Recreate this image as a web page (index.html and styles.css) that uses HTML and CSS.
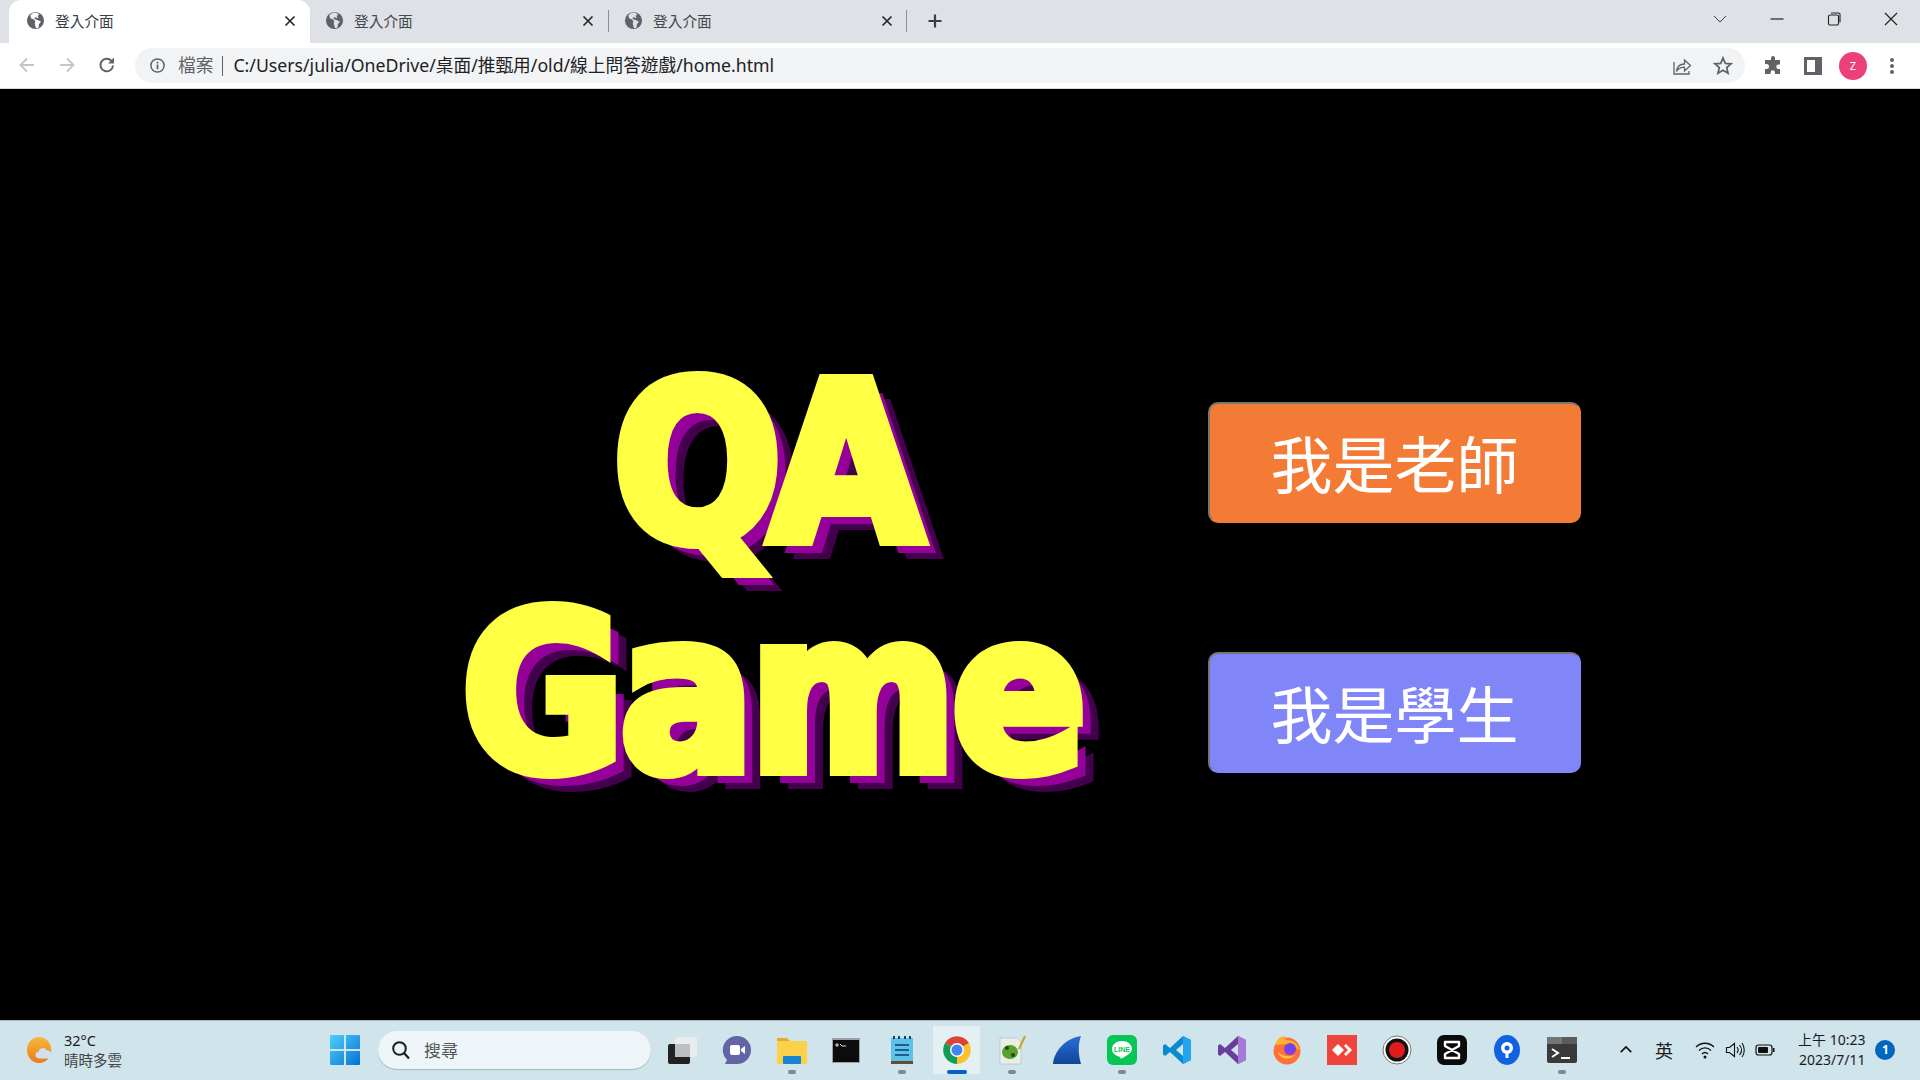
FILE: index.html
```html
<!DOCTYPE html>
<html lang="zh-Hant">

<head>
    <meta charset="UTF-8">
    <title>登入介面</title>
    <link rel="stylesheet" href="styles.css">
</head>

<body>
    <!-- 分頁列 -->
    <div class="tabstrip">
        <div class="tab tab-active">
            <svg class="globe" viewBox="0 0 20 20"><circle cx="10" cy="10" r="9" fill="#5f6368"/><path d="M10 1.500c-2 .3-4 1.200-5.400 2.800l.6 3.200 3.300 1.500 1.200 1.800-.5 2.700 1.300 4.500c1.300 0 2.200-.3 2.800-1l.2-3 2.300-2.700-3.500-1.800-2.700-.8-.8-1.600 1.900-.5 1.500 1 1-.7-1.200-1.600 2-1.400c-1-1.300-2.300-2-4-2.300z" fill="#fff"/></svg>
            <span class="tab-title">登入介面</span>
            <svg class="tab-close" viewBox="0 0 12 12"><path d="M1.500 1.500l9 9M10.500 1.500l-9 9" stroke="#26282b" stroke-width="1.700" fill="none"/></svg>
        </div>
        <div class="tab">
            <svg class="globe" viewBox="0 0 20 20"><circle cx="10" cy="10" r="9" fill="#5f6368"/><path d="M10 1.500c-2 .3-4 1.200-5.400 2.800l.6 3.200 3.300 1.500 1.200 1.800-.5 2.700 1.300 4.500c1.300 0 2.200-.3 2.800-1l.2-3 2.300-2.700-3.500-1.800-2.700-.8-.8-1.600 1.900-.5 1.500 1 1-.7-1.200-1.600 2-1.400c-1-1.300-2.300-2-4-2.300z" fill="#dee1e6"/></svg>
            <span class="tab-title">登入介面</span>
            <svg class="tab-close" viewBox="0 0 12 12"><path d="M1.500 1.500l9 9M10.500 1.500l-9 9" stroke="#26282b" stroke-width="1.700" fill="none"/></svg>
        </div>
        <div class="tab tab-sep">
            <svg class="globe" viewBox="0 0 20 20"><circle cx="10" cy="10" r="9" fill="#5f6368"/><path d="M10 1.500c-2 .3-4 1.200-5.400 2.800l.6 3.200 3.300 1.500 1.200 1.800-.5 2.700 1.300 4.500c1.300 0 2.200-.3 2.800-1l.2-3 2.300-2.700-3.500-1.800-2.700-.8-.8-1.600 1.900-.5 1.500 1 1-.7-1.200-1.600 2-1.400c-1-1.300-2.300-2-4-2.300z" fill="#dee1e6"/></svg>
            <span class="tab-title">登入介面</span>
            <svg class="tab-close" viewBox="0 0 12 12"><path d="M1.500 1.500l9 9M10.500 1.500l-9 9" stroke="#26282b" stroke-width="1.700" fill="none"/></svg>
        </div>
        <svg class="new-tab" viewBox="0 0 16 16"><path d="M8 1.500v13M1.500 8h13" stroke="#3c4043" stroke-width="2.200" fill="none"/></svg>
        <div class="window-btns">
            <svg viewBox="0 0 16 16"><path d="M2 5l6 6 6-6" stroke="#3c4043" stroke-width="1" fill="none"/></svg>
            <svg viewBox="0 0 16 16"><path d="M1.500 8h13" stroke="#222" stroke-width="1.200" fill="none"/></svg>
            <svg viewBox="0 0 16 16"><path d="M2.500 5.500a1.500 1.500 0 0 1 1.500-1.500h7a1.500 1.500 0 0 1 1.500 1.500v7a1.500 1.500 0 0 1-1.500 1.500h-7a1.500 1.500 0 0 1-1.500-1.500zM5 2h7.500a1.500 1.500 0 0 1 1.500 1.500v8" stroke="#222" stroke-width="1.100" fill="none"/></svg>
            <svg viewBox="0 0 16 16"><path d="M2 2l12 12M14 2l-12 12" stroke="#222" stroke-width="1.200" fill="none"/></svg>
        </div>
    </div>

    <!-- 網址列 -->
    <div class="toolbar">
        <div class="nav-btns">
            <svg viewBox="0 0 20 20"><path d="M17 10H4M10 3.500l-6.500 6.500 6.500 6.500" stroke="#c2c5c9" stroke-width="1.800" fill="none"/></svg>
            <svg viewBox="0 0 20 20"><path d="M3 10h13M10 3.500l6.500 6.500-6.500 6.500" stroke="#c2c5c9" stroke-width="1.800" fill="none"/></svg>
            <svg viewBox="0 0 20 20"><path d="M16 10.500a6.300 6.300 0 1 1-1.700-4.800" stroke="#5f6368" stroke-width="2" fill="none"/><path d="M17 2.500v6h-6z" fill="#5f6368"/></svg>
        </div>
        <div class="omnibox">
            <svg class="info" viewBox="0 0 18 18"><circle cx="9" cy="9" r="7" stroke="#5f6368" stroke-width="1.600" fill="none"/><path d="M9 8v5M9 5v1.800" stroke="#5f6368" stroke-width="1.800" fill="none"/></svg>
            <span class="scheme">檔案</span>
            <span class="url-sep"></span>
            <span class="url">C:/Users/julia/OneDrive/桌面/推甄用/old/線上問答遊戲/home.html</span>
            <div class="omni-right">
                <svg viewBox="0 0 20 20"><path d="M2 6v12h15v-3" stroke="#5f6368" stroke-width="1.300" fill="none"/><path d="M4.500 15.500c.5-5 4-7.500 8-7.500V4l6 5.500-6 5.500v-3.800c-3.500 0-6 1-8 4.300z" stroke="#5f6368" stroke-width="1.300" fill="none"/></svg>
                <svg viewBox="0 0 20 20"><path d="M10 2l2.300 5.300 5.700.5-4.300 3.800 1.300 5.600-5-3-5 3 1.300-5.600L2 7.800l5.700-.5z" stroke="#5f6368" stroke-width="1.800" fill="none"/></svg>
            </div>
        </div>
        <div class="toolbar-right">
            <svg class="ext" viewBox="0 0 20 20"><path d="M8 2a2 2 0 0 1 4 0v2h5v4.500h-1.500a2.200 2.200 0 0 0 0 4.400H17V18h-5v-1.500a2.200 2.200 0 0 0-4.400 0V18H2v-5h1.500a2.500 2.500 0 0 0 0-5H2V4h6z" fill="#5f6368"/></svg>
            <svg class="side" viewBox="0 0 18 18"><path d="M0 0h18v18H0zM3 3v12h8V3z" fill="#5f6368" fill-rule="evenodd"/></svg>
            <span class="avatar">Z</span>
            <svg class="dots" viewBox="0 0 6 18"><circle cx="3" cy="3" r="2" fill="#5f6368"/><circle cx="3" cy="9" r="2" fill="#5f6368"/><circle cx="3" cy="15" r="2" fill="#5f6368"/></svg>
        </div>
    </div>

    <!-- 首頁內容 -->
    <main class="home">
        <h1 class="game-title"><span class="title-qa">QA</span><br>Game</h1>
        <div class="choices">
            <a href="#" class="role-btn role-teacher">我是老師</a>
            <a href="#" class="role-btn role-student">我是學生</a>
        </div>
    </main>

    <!-- 工作列 -->
    <footer class="taskbar">
        <div class="weather">
            <svg viewBox="0 0 30 30"><defs><linearGradient id="sun" x1="0" y1="0" x2="0" y2="1"><stop offset="0" stop-color="#f6b93b"/><stop offset="1" stop-color="#ec7a1c"/></linearGradient></defs><ellipse cx="13" cy="15" rx="13" ry="14" fill="url(#sun)"/><path d="M13 24a3.500 3.500 0 0 1-.5-7 4.500 4.500 0 0 1 8.500-1.500 4 4 0 0 1 5 3.500 3 3 0 0 1-1 5z" fill="#cfe0ef"/></svg>
            <div class="weather-text">
                <span>32°C</span>
                <span class="weather-note">晴時多雲</span>
            </div>
        </div>
        <svg class="start" viewBox="0 0 30 30"><defs><linearGradient id="win" x1="0" y1="0" x2="1" y2="1"><stop offset="0" stop-color="#4fd0fb"/><stop offset="1" stop-color="#0571d3"/></linearGradient></defs><path d="M0 1a1 1 0 0 1 1-1h13v14H0zM16 0h13a1 1 0 0 1 1 1v13H16zM0 16h14v14H1a1 1 0 0 1-1-1zM16 16h14v13a1 1 0 0 1-1 1H16z" fill="url(#win)"/></svg>
        <div class="search">
            <svg viewBox="0 0 20 20"><circle cx="8.500" cy="8.500" r="6.300" stroke="#1f1f1f" stroke-width="2" fill="none"/><path d="M13 13l5 5.500" stroke="#1f1f1f" stroke-width="2.200" fill="none"/></svg>
            <span>搜尋</span>
        </div>
        <div class="apps">
            <div class="app"><svg viewBox="0 0 30 30"><rect x="1" y="9" width="22" height="20" rx="2" fill="#222"/><rect x="8" y="2" width="22" height="20" rx="2" fill="#e8ecee"/><rect x="8" y="9" width="15" height="13" fill="#bdbfc0"/></svg></div>
            <div class="app"><svg viewBox="0 0 30 30"><path d="M15 1a14 14 0 0 1 0 28H3l2-4A14 14 0 0 1 15 1z" fill="#6264a7"/><rect x="8" y="10" width="10" height="10" rx="2" fill="#fff"/><path d="M19 14l4-3v8l-4-3z" fill="#fff"/></svg></div>
            <div class="app app-open"><svg viewBox="0 0 30 30"><path d="M0 4a1 1 0 0 1 1-1h9l3 3H0z" fill="#e8a92c"/><rect y="6" width="30" height="23" rx="1" fill="#fbd14b"/><rect x="6" y="21" width="18" height="8" rx="1" fill="#1b83d4"/></svg></div>
            <div class="app"><svg viewBox="0 0 30 30"><rect y="3" width="28" height="25" fill="#9aa0a3"/><rect x="1" y="5" width="26" height="22" fill="#0c0c0c"/><path d="M4 9h2v2H4zM8 9l2 2h4" stroke="#ddd" stroke-width="1" fill="none"/></svg></div>
            <div class="app app-open"><svg viewBox="0 0 30 30"><rect x="4" y="3" width="22" height="24" fill="#5cc3e8"/><rect x="4" y="26" width="22" height="3" fill="#6b4a32"/><path d="M8 10h14M8 15h14M8 20h14" stroke="#1c5f8a" stroke-width="2"/><path d="M7 1v3M12 1v3M18 1v3M23 1v3" stroke="#1c3f5a" stroke-width="2"/></svg></div>
            <div class="app app-active"><svg viewBox="0 0 30 30"><path d="M15 15L3 8A14 14 0 0 1 27 8z" fill="#db4437"/><path d="M15 15L27 8A14 14 0 0 1 15 29z" fill="#fbc02d"/><path d="M15 15L15 29A14 14 0 0 1 3 8z" fill="#0f9d58"/><circle cx="15" cy="15" r="7" fill="#fff"/><circle cx="15" cy="15" r="5.500" fill="#4285f4"/></svg></div>
            <div class="app app-open"><svg viewBox="0 0 30 30"><path d="M3 3h17l4 4v22H3z" fill="#e9efe2" stroke="#aab" stroke-width=".5"/><ellipse cx="13" cy="17" rx="8" ry="7" fill="#5aa02c"/><circle cx="10" cy="13" r="2" fill="#1f4d10"/><circle cx="16" cy="20" r="2" fill="#1f4d10"/><path d="M22 14l6-13" stroke="#c9a227" stroke-width="2"/></svg></div>
            <div class="app"><svg viewBox="0 0 30 30"><defs><linearGradient id="fin" x1="0" y1="0" x2="0" y2="1"><stop offset="0" stop-color="#2a6fd6"/><stop offset="1" stop-color="#0f4596"/></linearGradient></defs><path d="M1 29C2 16 14 3 29 1c-3 8-3 18 0 28z" fill="url(#fin)"/></svg></div>
            <div class="app app-open"><svg viewBox="0 0 30 30"><rect width="30" height="30" rx="6" fill="#06c755"/><path d="M15 6c-5.500 0-10 3.500-10 8 0 4 3.500 7 8 7.800.8.200.5 2 .5 2.200 3-1.500 11.500-5.500 11.500-10 0-4.500-4.500-8-10-8z" fill="#fff"/><text x="15" y="16.500" class="line-text">LINE</text></svg></div>
            <div class="app"><svg viewBox="0 0 30 30"><path d="M21 1l8 4v20l-8 4-13-12-5 4-2-1.500V10.500L3 9l5 4z" fill="#0a8ad1"/><path d="M21 1l8 4v20l-8 4z" fill="#24a5ef"/><path d="M21 9l-7 6 7 6z" fill="#cfe4eb"/></svg></div>
            <div class="app"><svg viewBox="0 0 30 30"><path d="M21 1l8 4v20l-8 4-13-12-5 4-2-1.500V10.500L3 9l5 4z" fill="#6c3c9e"/><path d="M21 1l8 4v20l-8 4z" fill="#a67bd8"/><path d="M21 9l-7 6 7 6z" fill="#cfe4eb"/></svg></div>
            <div class="app"><svg viewBox="0 0 30 30"><circle cx="15" cy="16" r="13.500" fill="#ff7139"/><path d="M3 10c2-7 7-9 10-9-1 2 0 4 2 4 6 0 11 4 13 10L16 9z" fill="#ffb02e"/><circle cx="18" cy="14" r="6" fill="#7542e5"/><path d="M6 17c2 7 11 9 17 3-5 2-12 2-17-3z" fill="#ffc83d"/></svg></div>
            <div class="app"><svg viewBox="0 0 30 30"><rect width="30" height="30" fill="#ef443b"/><path d="M11 9l6 6-6 6-6-6z" fill="#fff"/><path d="M19 9l6 6-6 6-2-2 4-4-4-4z" fill="#fff"/></svg></div>
            <div class="app"><svg viewBox="0 0 30 30"><circle cx="15" cy="15" r="14" fill="#fff" stroke="#777" stroke-width="1"/><circle cx="15" cy="15" r="11.500" fill="#111"/><circle cx="15" cy="15" r="8" fill="#e01b1b"/></svg></div>
            <div class="app"><svg viewBox="0 0 30 30"><rect width="30" height="30" rx="7" fill="#0b0b0b"/><path d="M8 7h14v4l-14 8v4h14v-4L8 11z" stroke="#fff" stroke-width="2.400" stroke-linejoin="round" fill="none"/></svg></div>
            <div class="app"><svg viewBox="0 0 30 30"><ellipse cx="15" cy="15" rx="13" ry="15" fill="#0f62e0"/><circle cx="15" cy="13" r="6" fill="#fff"/><circle cx="15" cy="13" r="2.500" fill="#0f62e0"/><rect x="13.500" y="17" width="3" height="6" fill="#fff"/></svg></div>
            <div class="app app-open"><svg viewBox="0 0 30 30"><rect y="2" width="30" height="26" rx="2" fill="#3a3a3a"/><rect y="2" width="30" height="7" fill="#5c5c5c"/><rect y="2" width="15" height="7" fill="#757575"/><path d="M5 14l6 4-6 4" stroke="#fff" stroke-width="2" fill="none"/><path d="M14 23h9" stroke="#fff" stroke-width="2"/></svg></div>
        </div>
        <div class="tray">
            <svg class="tray-caret" viewBox="0 0 16 10"><path d="M2 8l6-6 6 6" stroke="#111" stroke-width="1.800" fill="none"/></svg>
            <span class="ime">英</span>
            <svg class="tray-icon" viewBox="0 0 20 20"><path d="M1 7c5-5 13-5 18 0M4 10.500c3.500-3.500 8.500-3.500 12 0M7 14c2-2 4-2 6 0" stroke="#111" stroke-width="1.300" fill="none"/><circle cx="10" cy="17" r="1.500" fill="#111"/></svg>
            <svg class="tray-icon" viewBox="0 0 20 20"><path d="M1.500 7.500h3l5-4v13l-5-4h-3z" stroke="#111" stroke-width="1.100" fill="none"/><path d="M12 7c1.500 2 1.500 4 0 6M14.500 5c2.500 3 2.500 7 0 10M17 3c3 4 3 10 0 14" stroke="#111" stroke-width="1.100" fill="none"/></svg>
            <svg class="tray-icon" viewBox="0 0 20 20"><rect x="1" y="5" width="16" height="10" rx="2.500" stroke="#111" stroke-width="1.200" fill="none"/><rect x="3" y="7" width="10" height="6" rx="1" fill="#111"/><rect x="18" y="8" width="1.500" height="4" fill="#111"/></svg>
            <div class="clock">
                <span>上午 10:23</span>
                <span>2023/7/11</span>
            </div>
            <span class="badge">1</span>
        </div>
    </footer>
</body>

</html>
```

FILE: styles.css
```css
* {
    box-sizing: border-box;
}

html,
body {
    height: 100%;
}

body {
    margin: 0;
    height: 1080px;
    overflow: hidden;
    display: flex;
    flex-direction: column;
    background-color: #000;
    font-family: "Noto Sans", "Noto Sans CJK TC", sans-serif;
}

/* tab strip */
.tabstrip {
    height: 43px;
    flex: none;
    display: flex;
    align-items: stretch;
    padding-left: 9px;
    background-color: #dee1e6;
}

.tab {
    width: 301px;
    display: flex;
    align-items: center;
    padding: 0 14px 2px 17px;
    color: #45494d;
    font-size: 14.700px;
}

.tab + .tab {
    width: 299px;
    padding-left: 15px;
    padding-right: 15px;
}

.tab-active {
    background-color: #fff;
    border-radius: 12px 12px 0 0;
    color: #3c4043;
}

.tab-sep {
    position: relative;
}

.tab-sep::before,
.tab-sep::after {
    content: "";
    position: absolute;
    top: 10px;
    height: 22px;
    width: 1px;
    background-color: #8b8e92;
}

.tab-sep::before {
    left: -1px;
}

.tab-sep::after {
    right: 1px;
}

.globe {
    width: 19px;
    height: 19px;
    flex: none;
}

.tab-title {
    margin-left: 10px;
    flex: 1;
}

.tab-close {
    width: 12px;
    height: 12px;
    flex: none;
}

.new-tab {
    width: 16px;
    height: 16px;
    margin: 13px 0 0 19px;
}

.window-btns {
    margin-left: auto;
    display: flex;
    align-items: center;
    gap: 41px;
    padding: 0 21px 5px 0;
}

.window-btns svg {
    width: 16px;
    height: 16px;
}

/* address bar */
.toolbar {
    height: 46px;
    flex: none;
    display: flex;
    align-items: flex-start;
    padding-top: 5px;
    background-color: #fff;
    border-bottom: 1px solid #d8dadd;
}

.nav-btns {
    width: 135px;
    display: flex;
    gap: 20px;
    padding: 7px 0 0 17px;
}

.nav-btns svg {
    width: 20px;
    height: 20px;
}

.omnibox {
    width: 1610px;
    height: 35px;
    display: flex;
    align-items: center;
    padding: 0 12px 3px 14px;
    border-radius: 18px;
    background-color: #f1f3f4;
    font-size: 17.700px;
}

.info {
    width: 17px;
    height: 17px;
    flex: none;
    margin-top: 3px;
}

.scheme {
    margin-left: 12px;
    color: #5f6368;
}

.url-sep {
    width: 1px;
    height: 20px;
    margin: 3px 10px 0 9px;
    background-color: #5f6368;
}

.url {
    color: #202124;
}

.omni-right {
    margin-left: auto;
    display: flex;
    gap: 21px;
    margin-top: 3px;
}

.omni-right svg {
    width: 20px;
    height: 20px;
}

.toolbar-right {
    flex: 1;
    display: flex;
    align-items: center;
    height: 35px;
    padding-left: 18px;
}

.ext {
    width: 20px;
    height: 20px;
}

.side {
    width: 18px;
    height: 18px;
    margin-left: 21px;
}

.avatar {
    width: 28px;
    height: 28px;
    margin-left: 17px;
    border-radius: 50%;
    background-color: #ec407a;
    color: #fff;
    font-size: 11px;
    line-height: 28px;
    text-align: center;
}

.dots {
    width: 6px;
    height: 18px;
    margin-left: 22px;
}

/* page */
.home {
    flex: 1;
    display: flex;
    align-items: flex-start;
    padding-left: 452px;
}

.game-title {
    width: 640px;
    margin: 260px 0 0;
    color: #ffff44;
    font-family: "DejaVu Sans", sans-serif;
    font-size: 220px;
    font-stretch: condensed;
    font-weight: 700;
    line-height: 230px;
    text-align: center;
    letter-spacing: -4px;
    -webkit-text-stroke: 12px #ffff44;
    text-shadow: 14px 13px 0 #96009a, 22px 19px 0 #43004c;
}

.title-qa {
    margin-right: 20px;
    letter-spacing: -12px;
}

.choices {
    display: flex;
    flex-direction: column;
    gap: 129px;
    margin: 313px 0 0 116px;
}

.role-btn {
    width: 373px;
    height: 121px;
    display: flex;
    align-items: center;
    justify-content: center;
    padding-bottom: 2px;
    border: 2px solid transparent;
    border-top-color: #767676;
    border-left-color: #767676;
    border-radius: 10px;
    color: #fff;
    font-size: 62px;
    font-weight: 400;
    letter-spacing: 0;
    text-decoration: none;
}

.role-teacher {
    background-color: #f47b35;
}

.role-student {
    background-color: #8086f8;
}

/* taskbar */
.taskbar {
    height: 60px;
    flex: none;
    display: flex;
    align-items: center;
    padding-bottom: 2px;
    border-top: 1px solid #a9b8bd;
    background-color: #cfe4eb;
    color: #1b1b1b;
}

.weather {
    width: 330px;
    display: flex;
    align-items: center;
    padding-left: 27px;
    font-size: 14.500px;
    line-height: 20px;
}

.weather svg {
    width: 28px;
    height: 28px;
}

.weather-text {
    display: flex;
    flex-direction: column;
    margin-left: 9px;
}

.weather-note {
    color: #444;
}

.start {
    width: 30px;
    height: 30px;
    flex: none;
}

.search {
    width: 273px;
    height: 38px;
    margin-left: 18px;
    display: flex;
    align-items: center;
    padding-left: 13px;
    border-radius: 19px;
    background-color: #edf5f8;
    box-shadow: 0 1px 1px rgba(0, 0, 0, 0.2);
    color: #555;
    font-size: 17px;
}

.search svg {
    width: 20px;
    height: 20px;
    margin-right: 13px;
}

.apps {
    display: flex;
    padding-left: 3px;
}

.app {
    position: relative;
    width: 55px;
    height: 48px;
    display: flex;
    align-items: center;
    justify-content: center;
}

.app svg {
    width: 30px;
    height: 30px;
}

.app-open::after,
.app-active::after {
    content: "";
    position: absolute;
    left: 24px;
    bottom: 0;
    width: 8px;
    height: 4px;
    border-radius: 2px;
    background-color: #7b8a90;
}

.app-active {
    background-color: rgba(255, 255, 255, 0.45);
    border-radius: 4px;
    background-clip: content-box;
    padding: 0 4px;
}

.app-active::after {
    left: 18px;
    width: 20px;
    background-color: #0067c0;
}

.line-text {
    fill: #06c755;
    font-family: "Liberation Sans", sans-serif;
    font-size: 7px;
    font-weight: 700;
    text-anchor: middle;
}

.tray {
    flex: 1;
    display: flex;
    align-items: center;
    padding-left: 30px;
}

.tray-caret {
    width: 14px;
    height: 9px;
}

.ime {
    margin: 0 12px 0 22px;
    font-size: 18px;
}

.tray-icon {
    width: 20px;
    height: 20px;
    margin-left: 10px;
}

.clock {
    display: flex;
    flex-direction: column;
    align-items: flex-end;
    margin-left: 23px;
    font-size: 14px;
    line-height: 20px;
}

.badge {
    width: 20px;
    height: 20px;
    margin-left: 10px;
    border-radius: 50%;
    background-color: #0067c0;
    color: #fff;
    font-size: 12px;
    font-weight: 700;
    line-height: 20px;
    text-align: center;
}
```
